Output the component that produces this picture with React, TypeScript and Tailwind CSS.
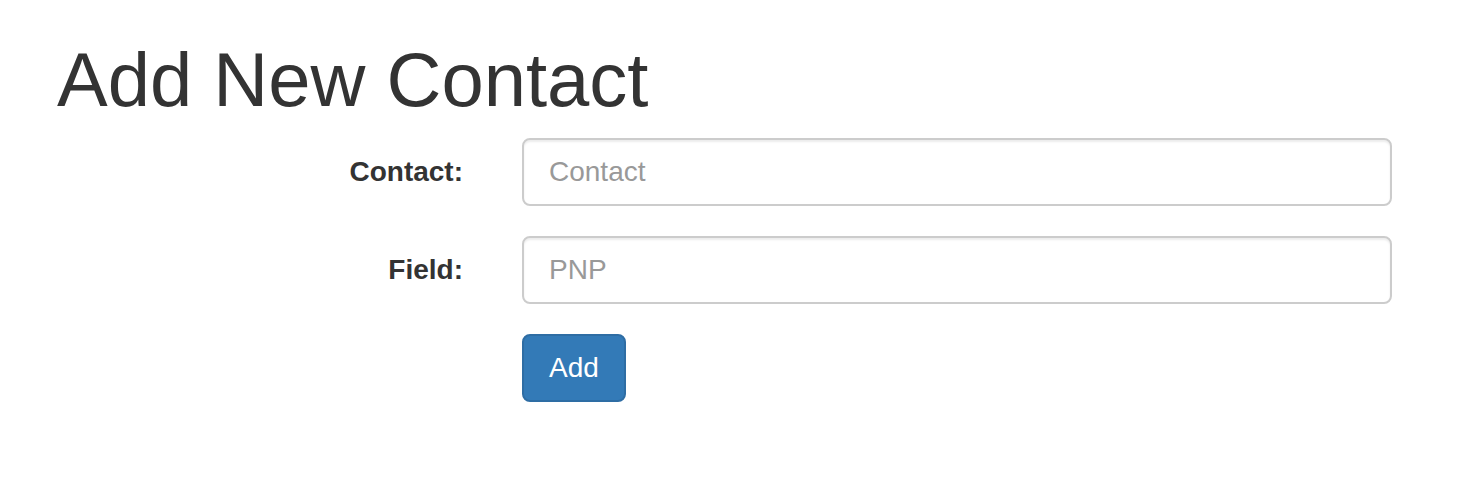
export default function App() {
  return (
    <div className="min-h-screen bg-white text-[#333333] font-['Liberation_Sans',Arial,sans-serif]">
      {/* Page heading */}
      <h1 className="pl-[57px] pt-[38px] text-[76px] leading-[83px] font-normal">Add New Contact</h1>

      {/* Horizontal form */}
      <form className="mt-[17px] flex flex-col gap-[30px]">
        <div className="flex items-center">
          <label className="w-[463px] text-right text-[28px] font-bold leading-none">Contact:</label>
          <input
            type="text"
            placeholder="Contact"
            className="ml-[59px] h-[68px] w-[870px] rounded-[8px] border-2 border-[#cccccc] px-[25px] text-[28px] text-[#555555] shadow-[inset_0_2px_2px_rgba(0,0,0,0.075)] outline-none placeholder:text-[#999999]"
          />
        </div>
        <div className="flex items-center">
          <label className="w-[463px] text-right text-[28px] font-bold leading-none">Field:</label>
          <input
            type="text"
            placeholder="PNP"
            className="ml-[59px] h-[68px] w-[870px] rounded-[8px] border-2 border-[#cccccc] px-[25px] text-[28px] text-[#555555] shadow-[inset_0_2px_2px_rgba(0,0,0,0.075)] outline-none placeholder:text-[#999999]"
          />
        </div>
        <div className="flex">
          <button
            type="button"
            className="ml-[522px] h-[68px] w-[104px] rounded-[8px] border-2 border-[#2e6da4] bg-[#337ab7] text-[28px] text-white"
          >
            Add
          </button>
        </div>
      </form>
    </div>
  )
}
